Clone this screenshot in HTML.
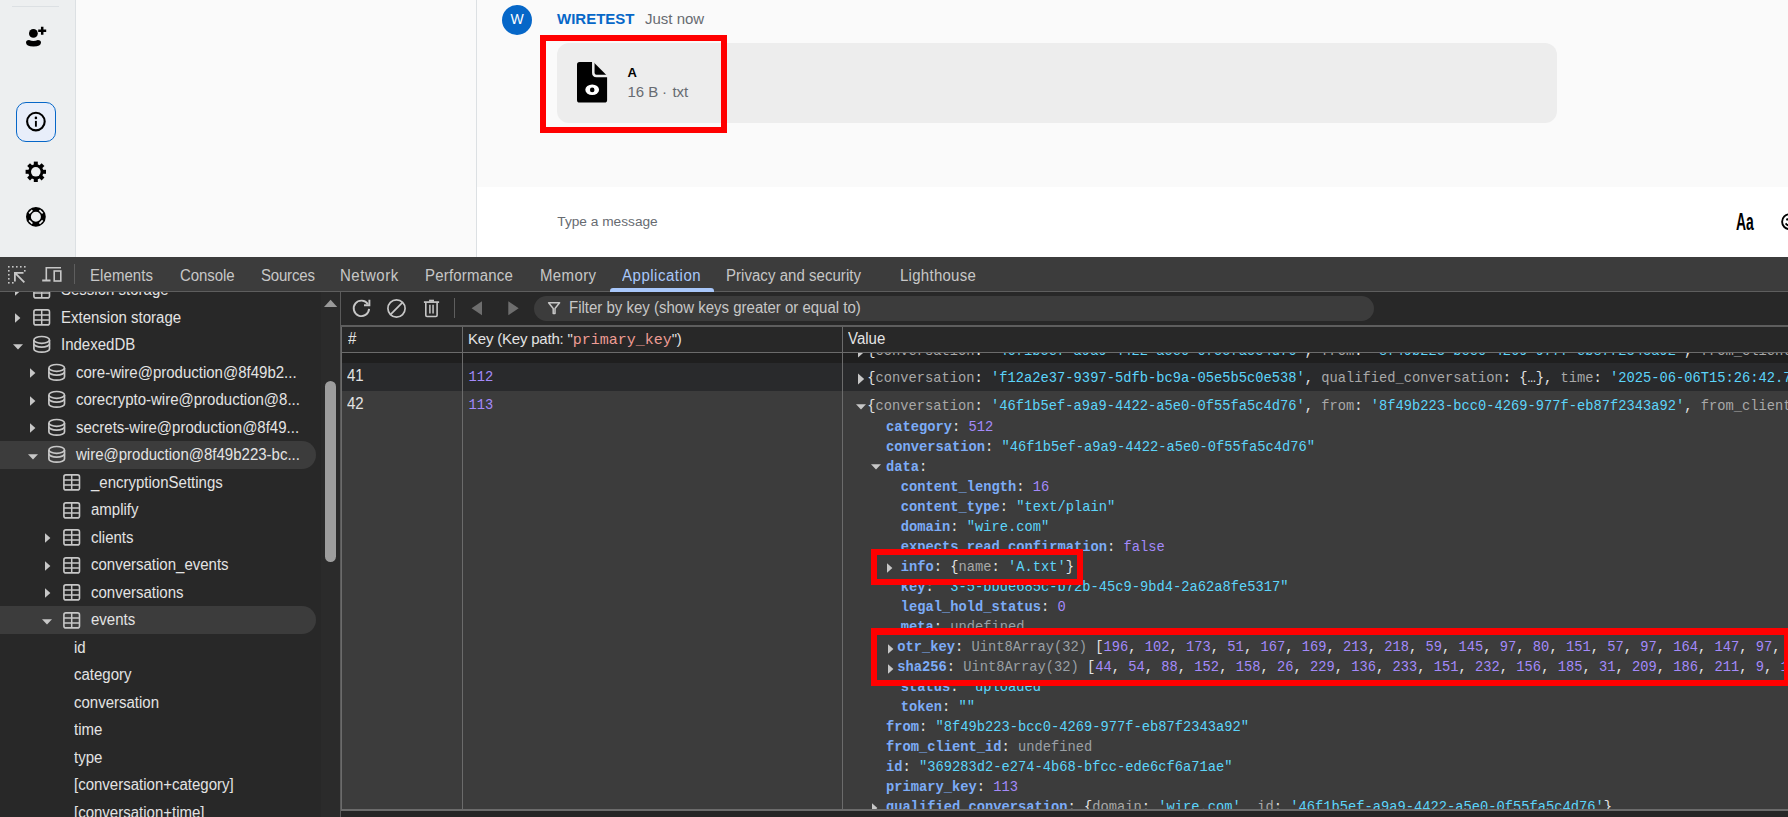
<!DOCTYPE html><html><head><meta charset="utf-8"><style>html,body{margin:0;padding:0;}body{width:1788px;height:817px;overflow:hidden;position:relative;background:#fafafa;font-family:"Liberation Sans",sans-serif;}</style></head><body>
<div style="position:absolute;left:0px;top:0px;width:75px;height:257px;background:#edeff0;"></div>
<div style="position:absolute;left:75px;top:0px;width:1px;height:257px;background:#dce0e3;"></div>
<div style="position:absolute;left:76px;top:0px;width:400px;height:257px;background:#fafafa;"></div>
<div style="position:absolute;left:476px;top:0px;width:1px;height:257px;background:#dce0e3;"></div>
<div style="position:absolute;left:477px;top:0px;width:1311px;height:187px;background:#fafafa;"></div>
<div style="position:absolute;left:477px;top:187px;width:1311px;height:70px;background:#ffffff;"></div>
<div style="position:absolute;left:12px;top:6px;width:47px;height:1px;background:#dce0e3;"></div>
<svg style="position:absolute;left:20px;top:20px;" width="32" height="32" viewBox="0 0 32 32"><circle cx="13.4" cy="13.4" r="4.4" fill="#000"/><path d="M6 22.5 Q6 20 9 20 Q13.4 21.8 17.8 20 Q21 20 21 22.5 Q21 26.5 13.5 26.5 Q6 26.5 6 22.5Z" fill="#000"/><path d="M18.2 10.7h8M22.2 6.7v8" stroke="#000" stroke-width="2.5"/></svg>
<div style="position:absolute;left:16px;top:102px;width:38px;height:38px;border:1px solid #0667c8;border-radius:10px;background:#e8eefa;"></div>
<svg style="position:absolute;left:24px;top:110px;" width="24" height="24" viewBox="0 0 24 24"><circle cx="11.9" cy="11.6" r="8.8" fill="none" stroke="#000" stroke-width="2.1"/><circle cx="11.9" cy="7.9" r="1.3" fill="#000"/><rect x="10.95" y="10.9" width="1.9" height="5.8" fill="#000"/></svg>
<svg style="position:absolute;left:24px;top:160px;" width="24" height="24" viewBox="0 0 24 24"><g transform="translate(11.8,11.8)"><g fill="#000"><rect x="-2" y="-10.2" width="4" height="4" transform="rotate(0)"/><rect x="-2" y="-10.2" width="4" height="4" transform="rotate(45)"/><rect x="-2" y="-10.2" width="4" height="4" transform="rotate(90)"/><rect x="-2" y="-10.2" width="4" height="4" transform="rotate(135)"/><rect x="-2" y="-10.2" width="4" height="4" transform="rotate(180)"/><rect x="-2" y="-10.2" width="4" height="4" transform="rotate(225)"/><rect x="-2" y="-10.2" width="4" height="4" transform="rotate(270)"/><rect x="-2" y="-10.2" width="4" height="4" transform="rotate(315)"/></g><circle r="7.6" fill="#000"/><circle r="4.8" fill="#edeff0"/></g></svg>
<svg style="position:absolute;left:24px;top:205px;" width="24" height="24" viewBox="0 0 24 24"><circle cx="11.9" cy="11.8" r="7.45" fill="none" stroke="#000" stroke-width="4.9"/><path d="M18.69 15.44L15.44 18.69M8.36 18.69L5.11 15.44M5.11 8.36L8.36 5.11M15.44 5.11L18.69 8.36" stroke="#edeff0" stroke-width="1.7" fill="none"/></svg>
<div style="position:absolute;left:502px;top:5px;width:30px;height:30px;border-radius:50%;background:#0667c8;color:#fff;font:14px/28px 'Liberation Sans',sans-serif;text-align:center;">W</div>
<div style="position:absolute;left:557px;top:10.90px;font:bold 15px/15px 'Liberation Sans',sans-serif;color:#0667c8;white-space:pre;">WIRETEST</div>
<div style="position:absolute;left:645px;top:10.90px;font:normal 15px/15px 'Liberation Sans',sans-serif;color:#676b71;white-space:pre;">Just now</div>
<div style="position:absolute;left:557px;top:43px;width:1000px;height:80px;border-radius:12px;background:#ededed;"></div>
<svg style="position:absolute;left:577px;top:62px;" width="31" height="41" viewBox="0 0 31 41"><path d="M2.6 0H16.4L30.1 13.8V38Q30.1 40.6 27.5 40.6H2.6Q0 40.6 0 38V2.6Q0 0 2.6 0Z" fill="#000"/><path d="M16.3 -1V10.8Q16.3 14 19.5 14H31" fill="none" stroke="#ededed" stroke-width="2.5"/><ellipse cx="15.2" cy="27.8" rx="6.9" ry="5.2" fill="#fff"/><circle cx="15.2" cy="27.9" r="2.3" fill="#000"/></svg>
<div style="position:absolute;left:627.5px;top:65.99px;font:bold 13px/13px 'Liberation Sans',sans-serif;color:#000;white-space:pre;">A</div>
<div style="position:absolute;left:627.5px;top:83.90px;font:normal 15px/15px 'Liberation Sans',sans-serif;color:#676b71;white-space:pre;">16 B</div>
<div style="position:absolute;left:662px;top:83.90px;font:normal 15px/15px 'Liberation Sans',sans-serif;color:#676b71;white-space:pre;">·</div>
<div style="position:absolute;left:672.4px;top:83.90px;font:normal 15px/15px 'Liberation Sans',sans-serif;color:#676b71;white-space:pre;">txt</div>
<div style="position:absolute;left:557.3px;top:214.90px;font:normal 13.7px/13.7px 'Liberation Sans',sans-serif;color:#676b71;white-space:pre;">Type a message</div>
<div style="position:absolute;left:1736px;top:209.68px;font:bold 24px/24px 'Liberation Sans',sans-serif;color:#000;white-space:pre;transform:scaleX(0.58);transform-origin:left;">Aa</div>
<svg style="position:absolute;left:1778px;top:211px;" width="10" height="22" viewBox="0 0 10 22"><circle cx="11.6" cy="10.7" r="7.5" fill="none" stroke="#000" stroke-width="1.9"/><circle cx="9.3" cy="8.4" r="1.2" fill="#000"/><path d="M7.6 12.4Q9.5 14.8 12 14.6" fill="none" stroke="#000" stroke-width="1.7"/></svg>
<div style="position:absolute;left:540px;top:35px;width:175px;height:86px;border:6px solid #f00;"></div>
<div style="position:absolute;left:0px;top:257px;width:1788px;height:560px;background:#282828;"></div>
<div style="position:absolute;left:0px;top:257px;width:1788px;height:34px;background:#3c3c3c;"></div>
<div style="position:absolute;left:0px;top:291px;width:1788px;height:1px;background:#5e5e5e;"></div>
<svg style="position:absolute;left:6px;top:264px;" width="22" height="22" viewBox="0 0 22 22"><g fill="#c7c7c7"><rect x="2" y="2" width="1.6" height="1.6"/><rect x="6" y="2" width="1.6" height="1.6"/><rect x="10" y="2" width="1.6" height="1.6"/><rect x="14" y="2" width="1.6" height="1.6"/><rect x="18" y="2" width="1.6" height="1.6"/><rect x="2" y="6" width="1.6" height="1.6"/><rect x="2" y="10" width="1.6" height="1.6"/><rect x="2" y="14" width="1.6" height="1.6"/><rect x="2" y="18" width="1.6" height="1.6"/><rect x="6" y="18" width="1.6" height="1.6"/><rect x="18" y="6" width="1.6" height="1.6"/></g><path d="M8 8h9.5v1.8H11.1L19 17.7 17.7 19 9.8 11.1V17.5H8Z" fill="#c7c7c7"/></svg>
<svg style="position:absolute;left:41px;top:264px;" width="22" height="22" viewBox="0 0 22 22"><path d="M4.5 3H20V4.6H6.1V15.6H9.5V17.6H1.2V15.6H4.5Z" fill="#c7c7c7"/><rect x="13.2" y="7" width="6.6" height="10" fill="none" stroke="#c7c7c7" stroke-width="1.6"/></svg>
<div style="position:absolute;left:74px;top:264px;width:1px;height:20px;background:#5e5e5e;"></div>
<div style="position:absolute;left:90px;top:267.89px;font:normal 15.6px/15.6px 'Liberation Sans',sans-serif;color:#c7c7c7;white-space:pre;letter-spacing:0.07px;transform:scaleX(0.962);transform-origin:0 0;">Elements</div>
<div style="position:absolute;left:180px;top:267.89px;font:normal 15.6px/15.6px 'Liberation Sans',sans-serif;color:#c7c7c7;white-space:pre;letter-spacing:-0.07px;transform:scaleX(0.962);transform-origin:0 0;">Console</div>
<div style="position:absolute;left:260.8px;top:267.89px;font:normal 15.6px/15.6px 'Liberation Sans',sans-serif;color:#c7c7c7;white-space:pre;letter-spacing:-0.2px;transform:scaleX(0.962);transform-origin:0 0;">Sources</div>
<div style="position:absolute;left:339.7px;top:267.89px;font:normal 15.6px/15.6px 'Liberation Sans',sans-serif;color:#c7c7c7;white-space:pre;letter-spacing:0.55px;transform:scaleX(0.962);transform-origin:0 0;">Network</div>
<div style="position:absolute;left:425px;top:267.89px;font:normal 15.6px/15.6px 'Liberation Sans',sans-serif;color:#c7c7c7;white-space:pre;letter-spacing:0.2px;transform:scaleX(0.962);transform-origin:0 0;">Performance</div>
<div style="position:absolute;left:540px;top:267.89px;font:normal 15.6px/15.6px 'Liberation Sans',sans-serif;color:#c7c7c7;white-space:pre;letter-spacing:0.38px;transform:scaleX(0.962);transform-origin:0 0;">Memory</div>
<div style="position:absolute;left:622px;top:267.89px;font:normal 15.6px/15.6px 'Liberation Sans',sans-serif;color:#a8c7fa;white-space:pre;letter-spacing:0.54px;transform:scaleX(0.962);transform-origin:0 0;">Application</div>
<div style="position:absolute;left:726px;top:267.89px;font:normal 15.6px/15.6px 'Liberation Sans',sans-serif;color:#c7c7c7;white-space:pre;letter-spacing:0.04px;transform:scaleX(0.962);transform-origin:0 0;">Privacy and security</div>
<div style="position:absolute;left:900px;top:267.89px;font:normal 15.6px/15.6px 'Liberation Sans',sans-serif;color:#c7c7c7;white-space:pre;letter-spacing:0.28px;transform:scaleX(0.962);transform-origin:0 0;">Lighthouse</div>
<div style="position:absolute;left:610px;top:288px;width:104px;height:4px;background:#a8c7fa;border-radius:3px 3px 0 0;"></div>
<div style="position:absolute;left:0px;top:292px;width:340px;height:525px;background:#282828;"></div>
<div style="position:absolute;left:321px;top:292px;width:19px;height:525px;background:#2b2b2b;"></div>
<div style="position:absolute;left:340px;top:292px;width:1px;height:525px;background:#5a5a5a;"></div>
<svg style="position:absolute;left:323px;top:298px;" width="16" height="12" viewBox="0 0 16 12"><path d="M1 9L7.6 1.8L14.2 9Z" fill="#9a9a9a"/></svg>
<div style="position:absolute;left:325px;top:381px;width:11px;height:181px;border-radius:5.5px;background:#9e9e9e;"></div>
<div style="position:absolute;left:0;top:292px;width:321px;height:525px;overflow:hidden;">
<svg style="position:absolute;left:14.7px;top:-6.5px;" width="7" height="10" viewBox="0 0 7 10"><path d="M0 0.3L5.4 5L0 9.7Z" fill="#c7c7c7"/></svg>
<svg style="position:absolute;left:33px;top:-10.5px;" width="18" height="17" viewBox="0 0 18 17"><rect x="0.9" y="0.9" width="15.6" height="15" rx="2" fill="none" stroke="#c7c7c7" stroke-width="1.6"/><path d="M1 5.9H16.5M1 11H16.5M8.7 1V16" stroke="#c7c7c7" stroke-width="1.5"/></svg>
<div style="position:absolute;left:60.6px;top:-9.91px;font:normal 15.6px/15.6px 'Liberation Sans',sans-serif;color:#e3e3e3;white-space:pre;transform:scaleX(0.962);transform-origin:0 0;">Session storage</div>
<svg style="position:absolute;left:14.7px;top:21.0px;" width="7" height="10" viewBox="0 0 7 10"><path d="M0 0.3L5.4 5L0 9.7Z" fill="#c7c7c7"/></svg>
<svg style="position:absolute;left:33px;top:17.0px;" width="18" height="17" viewBox="0 0 18 17"><rect x="0.9" y="0.9" width="15.6" height="15" rx="2" fill="none" stroke="#c7c7c7" stroke-width="1.6"/><path d="M1 5.9H16.5M1 11H16.5M8.7 1V16" stroke="#c7c7c7" stroke-width="1.5"/></svg>
<div style="position:absolute;left:60.6px;top:17.59px;font:normal 15.6px/15.6px 'Liberation Sans',sans-serif;color:#e3e3e3;white-space:pre;transform:scaleX(0.962);transform-origin:0 0;">Extension storage</div>
<svg style="position:absolute;left:12.6px;top:51.5px;" width="11" height="6" viewBox="0 0 11 6"><path d="M0 0.2H10L5 5.6Z" fill="#c7c7c7"/></svg>
<svg style="position:absolute;left:33px;top:43.0px;" width="18" height="19" viewBox="0 0 18 19"><g fill="none" stroke="#c7c7c7" stroke-width="1.7"><ellipse cx="8.7" cy="4.9" rx="7.8" ry="3.4"/><path d="M0.9 4.9V14A7.8 3.2 0 0 0 16.5 14V4.9"/><path d="M0.9 8.8A7.8 3.3 0 0 0 16.5 8.8"/></g></svg>
<div style="position:absolute;left:60.6px;top:45.09px;font:normal 15.6px/15.6px 'Liberation Sans',sans-serif;color:#e3e3e3;white-space:pre;transform:scaleX(0.962);transform-origin:0 0;">IndexedDB</div>
<svg style="position:absolute;left:29.7px;top:76.0px;" width="7" height="10" viewBox="0 0 7 10"><path d="M0 0.3L5.4 5L0 9.7Z" fill="#c7c7c7"/></svg>
<svg style="position:absolute;left:47.7px;top:70.5px;" width="18" height="19" viewBox="0 0 18 19"><g fill="none" stroke="#c7c7c7" stroke-width="1.7"><ellipse cx="8.7" cy="4.9" rx="7.8" ry="3.4"/><path d="M0.9 4.9V14A7.8 3.2 0 0 0 16.5 14V4.9"/><path d="M0.9 8.8A7.8 3.3 0 0 0 16.5 8.8"/></g></svg>
<div style="position:absolute;left:76px;top:72.59px;font:normal 15.6px/15.6px 'Liberation Sans',sans-serif;color:#e3e3e3;white-space:pre;transform:scaleX(0.962);transform-origin:0 0;">core-wire@production@8f49b2...</div>
<svg style="position:absolute;left:29.7px;top:103.5px;" width="7" height="10" viewBox="0 0 7 10"><path d="M0 0.3L5.4 5L0 9.7Z" fill="#c7c7c7"/></svg>
<svg style="position:absolute;left:47.7px;top:98.0px;" width="18" height="19" viewBox="0 0 18 19"><g fill="none" stroke="#c7c7c7" stroke-width="1.7"><ellipse cx="8.7" cy="4.9" rx="7.8" ry="3.4"/><path d="M0.9 4.9V14A7.8 3.2 0 0 0 16.5 14V4.9"/><path d="M0.9 8.8A7.8 3.3 0 0 0 16.5 8.8"/></g></svg>
<div style="position:absolute;left:76px;top:100.09px;font:normal 15.6px/15.6px 'Liberation Sans',sans-serif;color:#e3e3e3;white-space:pre;transform:scaleX(0.962);transform-origin:0 0;">corecrypto-wire@production@8...</div>
<svg style="position:absolute;left:29.7px;top:131.0px;" width="7" height="10" viewBox="0 0 7 10"><path d="M0 0.3L5.4 5L0 9.7Z" fill="#c7c7c7"/></svg>
<svg style="position:absolute;left:47.7px;top:125.5px;" width="18" height="19" viewBox="0 0 18 19"><g fill="none" stroke="#c7c7c7" stroke-width="1.7"><ellipse cx="8.7" cy="4.9" rx="7.8" ry="3.4"/><path d="M0.9 4.9V14A7.8 3.2 0 0 0 16.5 14V4.9"/><path d="M0.9 8.8A7.8 3.3 0 0 0 16.5 8.8"/></g></svg>
<div style="position:absolute;left:76px;top:127.59px;font:normal 15.6px/15.6px 'Liberation Sans',sans-serif;color:#e3e3e3;white-space:pre;transform:scaleX(0.962);transform-origin:0 0;">secrets-wire@production@8f49...</div>
<div style="position:absolute;left:0;top:149.0px;width:316px;height:28px;border-radius:0 14px 14px 0;background:#3c3c3c;"></div>
<svg style="position:absolute;left:27.599999999999998px;top:161.5px;" width="11" height="6" viewBox="0 0 11 6"><path d="M0 0.2H10L5 5.6Z" fill="#c7c7c7"/></svg>
<svg style="position:absolute;left:47.7px;top:153.0px;" width="18" height="19" viewBox="0 0 18 19"><g fill="none" stroke="#c7c7c7" stroke-width="1.7"><ellipse cx="8.7" cy="4.9" rx="7.8" ry="3.4"/><path d="M0.9 4.9V14A7.8 3.2 0 0 0 16.5 14V4.9"/><path d="M0.9 8.8A7.8 3.3 0 0 0 16.5 8.8"/></g></svg>
<div style="position:absolute;left:76px;top:155.09px;font:normal 15.6px/15.6px 'Liberation Sans',sans-serif;color:#e3e3e3;white-space:pre;transform:scaleX(0.962);transform-origin:0 0;">wire@production@8f49b223-bc...</div>
<svg style="position:absolute;left:62.5px;top:182.0px;" width="18" height="17" viewBox="0 0 18 17"><rect x="0.9" y="0.9" width="15.6" height="15" rx="2" fill="none" stroke="#c7c7c7" stroke-width="1.6"/><path d="M1 5.9H16.5M1 11H16.5M8.7 1V16" stroke="#c7c7c7" stroke-width="1.5"/></svg>
<div style="position:absolute;left:91.4px;top:182.59px;font:normal 15.6px/15.6px 'Liberation Sans',sans-serif;color:#e3e3e3;white-space:pre;transform:scaleX(0.962);transform-origin:0 0;">_encryptionSettings</div>
<svg style="position:absolute;left:62.5px;top:209.5px;" width="18" height="17" viewBox="0 0 18 17"><rect x="0.9" y="0.9" width="15.6" height="15" rx="2" fill="none" stroke="#c7c7c7" stroke-width="1.6"/><path d="M1 5.9H16.5M1 11H16.5M8.7 1V16" stroke="#c7c7c7" stroke-width="1.5"/></svg>
<div style="position:absolute;left:91.4px;top:210.09px;font:normal 15.6px/15.6px 'Liberation Sans',sans-serif;color:#e3e3e3;white-space:pre;transform:scaleX(0.962);transform-origin:0 0;">amplify</div>
<svg style="position:absolute;left:44.5px;top:241.0px;" width="7" height="10" viewBox="0 0 7 10"><path d="M0 0.3L5.4 5L0 9.7Z" fill="#c7c7c7"/></svg>
<svg style="position:absolute;left:62.5px;top:237.0px;" width="18" height="17" viewBox="0 0 18 17"><rect x="0.9" y="0.9" width="15.6" height="15" rx="2" fill="none" stroke="#c7c7c7" stroke-width="1.6"/><path d="M1 5.9H16.5M1 11H16.5M8.7 1V16" stroke="#c7c7c7" stroke-width="1.5"/></svg>
<div style="position:absolute;left:91.4px;top:237.59px;font:normal 15.6px/15.6px 'Liberation Sans',sans-serif;color:#e3e3e3;white-space:pre;transform:scaleX(0.962);transform-origin:0 0;">clients</div>
<svg style="position:absolute;left:44.5px;top:268.5px;" width="7" height="10" viewBox="0 0 7 10"><path d="M0 0.3L5.4 5L0 9.7Z" fill="#c7c7c7"/></svg>
<svg style="position:absolute;left:62.5px;top:264.5px;" width="18" height="17" viewBox="0 0 18 17"><rect x="0.9" y="0.9" width="15.6" height="15" rx="2" fill="none" stroke="#c7c7c7" stroke-width="1.6"/><path d="M1 5.9H16.5M1 11H16.5M8.7 1V16" stroke="#c7c7c7" stroke-width="1.5"/></svg>
<div style="position:absolute;left:91.4px;top:265.09px;font:normal 15.6px/15.6px 'Liberation Sans',sans-serif;color:#e3e3e3;white-space:pre;transform:scaleX(0.962);transform-origin:0 0;">conversation_events</div>
<svg style="position:absolute;left:44.5px;top:296.0px;" width="7" height="10" viewBox="0 0 7 10"><path d="M0 0.3L5.4 5L0 9.7Z" fill="#c7c7c7"/></svg>
<svg style="position:absolute;left:62.5px;top:292.0px;" width="18" height="17" viewBox="0 0 18 17"><rect x="0.9" y="0.9" width="15.6" height="15" rx="2" fill="none" stroke="#c7c7c7" stroke-width="1.6"/><path d="M1 5.9H16.5M1 11H16.5M8.7 1V16" stroke="#c7c7c7" stroke-width="1.5"/></svg>
<div style="position:absolute;left:91.4px;top:292.59px;font:normal 15.6px/15.6px 'Liberation Sans',sans-serif;color:#e3e3e3;white-space:pre;transform:scaleX(0.962);transform-origin:0 0;">conversations</div>
<div style="position:absolute;left:0;top:314.0px;width:316px;height:28px;border-radius:0 14px 14px 0;background:#3c3c3c;"></div>
<svg style="position:absolute;left:42.4px;top:326.5px;" width="11" height="6" viewBox="0 0 11 6"><path d="M0 0.2H10L5 5.6Z" fill="#c7c7c7"/></svg>
<svg style="position:absolute;left:62.5px;top:319.5px;" width="18" height="17" viewBox="0 0 18 17"><rect x="0.9" y="0.9" width="15.6" height="15" rx="2" fill="none" stroke="#c7c7c7" stroke-width="1.6"/><path d="M1 5.9H16.5M1 11H16.5M8.7 1V16" stroke="#c7c7c7" stroke-width="1.5"/></svg>
<div style="position:absolute;left:91.4px;top:320.09px;font:normal 15.6px/15.6px 'Liberation Sans',sans-serif;color:#e3e3e3;white-space:pre;transform:scaleX(0.962);transform-origin:0 0;">events</div>
<div style="position:absolute;left:74px;top:347.59px;font:normal 15.6px/15.6px 'Liberation Sans',sans-serif;color:#e3e3e3;white-space:pre;transform:scaleX(0.962);transform-origin:0 0;">id</div>
<div style="position:absolute;left:74px;top:375.09px;font:normal 15.6px/15.6px 'Liberation Sans',sans-serif;color:#e3e3e3;white-space:pre;transform:scaleX(0.962);transform-origin:0 0;">category</div>
<div style="position:absolute;left:74px;top:402.59px;font:normal 15.6px/15.6px 'Liberation Sans',sans-serif;color:#e3e3e3;white-space:pre;transform:scaleX(0.962);transform-origin:0 0;">conversation</div>
<div style="position:absolute;left:74px;top:430.09px;font:normal 15.6px/15.6px 'Liberation Sans',sans-serif;color:#e3e3e3;white-space:pre;transform:scaleX(0.962);transform-origin:0 0;">time</div>
<div style="position:absolute;left:74px;top:457.59px;font:normal 15.6px/15.6px 'Liberation Sans',sans-serif;color:#e3e3e3;white-space:pre;transform:scaleX(0.962);transform-origin:0 0;">type</div>
<div style="position:absolute;left:74px;top:485.09px;font:normal 15.6px/15.6px 'Liberation Sans',sans-serif;color:#e3e3e3;white-space:pre;transform:scaleX(0.962);transform-origin:0 0;">[conversation+category]</div>
<div style="position:absolute;left:74px;top:512.59px;font:normal 15.6px/15.6px 'Liberation Sans',sans-serif;color:#e3e3e3;white-space:pre;transform:scaleX(0.962);transform-origin:0 0;">[conversation+time]</div>
</div>
<div style="position:absolute;left:341px;top:292px;width:1447px;height:33px;background:#282828;"></div>
<div style="position:absolute;left:341px;top:325px;width:1447px;height:2px;background:#5e5e5e;"></div>
<svg style="position:absolute;left:350px;top:297px;" width="24" height="24" viewBox="0 0 24 24"><path d="M19.1 11.9A7.7 7.7 0 1 1 17.9 7.2" fill="none" stroke="#c7c7c7" stroke-width="1.9"/><path d="M19.4 2.8V8.2H14" fill="none" stroke="#c7c7c7" stroke-width="1.9"/></svg>
<svg style="position:absolute;left:385px;top:297px;" width="24" height="24" viewBox="0 0 24 24"><circle cx="11.5" cy="11.5" r="8.6" fill="none" stroke="#c7c7c7" stroke-width="1.7"/><path d="M17.6 5.4L5.4 17.6" stroke="#c7c7c7" stroke-width="1.7"/></svg>
<svg style="position:absolute;left:420px;top:297px;" width="24" height="24" viewBox="0 0 24 24"><path d="M3.9 5.1H19.1" fill="none" stroke="#c7c7c7" stroke-width="1.7"/><rect x="9.1" y="2.7" width="4.9" height="2" fill="#c7c7c7"/><path d="M5.8 5.5V18.3Q5.8 19.5 7 19.5H15.9Q17.1 19.5 17.1 18.3V5.5" fill="none" stroke="#c7c7c7" stroke-width="1.6"/><path d="M9.9 7.8V16.4M13.05 7.8V16.4" stroke="#c7c7c7" stroke-width="1.5"/></svg>
<div style="position:absolute;left:454px;top:298px;width:1px;height:20px;background:#5e5e5e;"></div>
<svg style="position:absolute;left:471px;top:301px;" width="12" height="15" viewBox="0 0 12 15"><path d="M11 0.3V14.2L0.6 7.3Z" fill="#6e6e6e"/></svg>
<svg style="position:absolute;left:508px;top:301px;" width="12" height="15" viewBox="0 0 12 15"><path d="M0.3 0.3V14.2L10.7 7.3Z" fill="#6e6e6e"/></svg>
<div style="position:absolute;left:534px;top:296px;width:840px;height:25px;border-radius:12.5px;background:#3c3c3c;"></div>
<svg style="position:absolute;left:547px;top:301px;" width="14" height="14" viewBox="0 0 14 14"><path d="M1.6 1.8H12.6L8 7.4V12.6H6.2V7.4Z" fill="none" stroke="#c7c7c7" stroke-width="1.5" stroke-linejoin="round"/></svg>
<div style="position:absolute;left:568.9px;top:299.99px;font:normal 15.6px/15.6px 'Liberation Sans',sans-serif;color:#c7c7c7;white-space:pre;transform:scaleX(0.962);transform-origin:0 0;">Filter by key (show keys greater or equal to)</div>
<div style="position:absolute;left:341px;top:327px;width:1447px;height:25px;background:#282828;"></div>
<div style="position:absolute;left:341px;top:352px;width:1447px;height:1px;background:#6b6b6b;"></div>
<div style="position:absolute;left:341px;top:353px;width:1447px;height:10px;background:#1f1f1f;"></div>
<div style="position:absolute;left:341px;top:363px;width:1447px;height:28px;background:#292a2c;"></div>
<div style="position:absolute;left:341px;top:391px;width:1447px;height:418px;background:#3c3c3c;"></div>
<div style="position:absolute;left:341px;top:327px;width:1px;height:483px;background:#6b6b6b;"></div>
<div style="position:absolute;left:462px;top:327px;width:1px;height:483px;background:#6b6b6b;"></div>
<div style="position:absolute;left:842px;top:327px;width:1px;height:483px;background:#6b6b6b;"></div>
<div style="position:absolute;left:341px;top:809px;width:1447px;height:2px;background:#6b6b6b;"></div>
<div style="position:absolute;left:341px;top:811px;width:1447px;height:6px;background:#262626;"></div>
<div style="position:absolute;left:347.5px;top:330.89px;font:normal 15.6px/15.6px 'Liberation Sans',sans-serif;color:#e3e3e3;white-space:pre;transform:scaleX(0.962);transform-origin:0 0;">#</div>
<div style="position:absolute;left:468px;top:331.00px;font:15px/15px 'Liberation Sans',sans-serif;color:#e3e3e3;white-space:pre;letter-spacing:-0.2px;">Key (Key path: "<span style="font-family:'Liberation Mono',monospace;font-size:15px;letter-spacing:0;color:#ee9c94;">primary_key</span>")</div>
<div style="position:absolute;left:848px;top:330.89px;font:normal 15.6px/15.6px 'Liberation Sans',sans-serif;color:#e3e3e3;white-space:pre;transform:scaleX(0.962);transform-origin:0 0;">Value</div>
<div style="position:absolute;left:346.8px;top:368.09px;font:normal 15.6px/15.6px 'Liberation Sans',sans-serif;color:#e3e3e3;white-space:pre;transform:scaleX(0.962);transform-origin:0 0;">41</div>
<div style="position:absolute;left:346.8px;top:395.69px;font:normal 15.6px/15.6px 'Liberation Sans',sans-serif;color:#e3e3e3;white-space:pre;transform:scaleX(0.962);transform-origin:0 0;">42</div>
<div style="position:absolute;left:468.6px;top:371.36px;font:normal 13.76px/13.76px 'Liberation Mono',monospace;color:#a48afb;white-space:pre;">112</div>
<div style="position:absolute;left:468.6px;top:399.16px;font:normal 13.76px/13.76px 'Liberation Mono',monospace;color:#a48afb;white-space:pre;">113</div>
<div style="position:absolute;left:843px;top:353px;width:945px;height:456px;overflow:hidden;">
<svg style="position:absolute;left:14.899999999999977px;top:-7px;" width="7" height="12" viewBox="0 0 7 12"><path d="M0 0.5L6.2 6L0 11.5Z" fill="#c7c7c7"/></svg>
<div style="position:absolute;left:24.299999999999955px;top:-8.04px;font:normal 13.76px/13.76px 'Liberation Mono',monospace;color:#e3e3e3;white-space:pre;"><span style="color:#e3e3e3;">{</span><span style="color:#a8a8a8;">conversation</span><span style="color:#e3e3e3;">: </span><span style="color:#5cd5fb;">&#x27;46f1b5ef-a9a9-4422-a5e0-0f55fa5c4d76&#x27;</span><span style="color:#e3e3e3;">, </span><span style="color:#a8a8a8;">from</span><span style="color:#e3e3e3;">: </span><span style="color:#5cd5fb;">&#x27;8f49b223-bcc0-4269-977f-eb87f2343a92&#x27;</span><span style="color:#e3e3e3;">, </span><span style="color:#a8a8a8;">from_client_id</span><span style="color:#e3e3e3;">: </span><span style="color:#9aa0a6;">undefined</span></div>
<svg style="position:absolute;left:14.899999999999977px;top:20.30000000000001px;" width="7" height="12" viewBox="0 0 7 12"><path d="M0 0.5L6.2 6L0 11.5Z" fill="#c7c7c7"/></svg>
<div style="position:absolute;left:24.299999999999955px;top:18.86px;font:normal 13.76px/13.76px 'Liberation Mono',monospace;color:#e3e3e3;white-space:pre;"><span style="color:#e3e3e3;">{</span><span style="color:#a8a8a8;">conversation</span><span style="color:#e3e3e3;">: </span><span style="color:#5cd5fb;">&#x27;f12a2e37-9397-5dfb-bc9a-05e5b5c0e538&#x27;</span><span style="color:#e3e3e3;">, </span><span style="color:#a8a8a8;">qualified_conversation</span><span style="color:#e3e3e3;">: </span><span style="color:#e3e3e3;">{…}</span><span style="color:#e3e3e3;">, </span><span style="color:#a8a8a8;">time</span><span style="color:#e3e3e3;">: </span><span style="color:#5cd5fb;">&#x27;2025-06-06T15:26:42.763Z&#x27;</span></div>
<svg style="position:absolute;left:12.799999999999955px;top:51.30000000000001px;" width="11" height="6" viewBox="0 0 11 6"><path d="M0 0.2H10L5 5.6Z" fill="#c7c7c7"/></svg>
<div style="position:absolute;left:24.299999999999955px;top:46.66px;font:normal 13.76px/13.76px 'Liberation Mono',monospace;color:#e3e3e3;white-space:pre;"><span style="color:#e3e3e3;">{</span><span style="color:#a8a8a8;">conversation</span><span style="color:#e3e3e3;">: </span><span style="color:#5cd5fb;">&#x27;46f1b5ef-a9a9-4422-a5e0-0f55fa5c4d76&#x27;</span><span style="color:#e3e3e3;">, </span><span style="color:#a8a8a8;">from</span><span style="color:#e3e3e3;">: </span><span style="color:#5cd5fb;">&#x27;8f49b223-bcc0-4269-977f-eb87f2343a92&#x27;</span><span style="color:#e3e3e3;">, </span><span style="color:#a8a8a8;">from_client_id</span><span style="color:#e3e3e3;">: </span><span style="color:#9aa0a6;">undefined</span></div>
<div style="position:absolute;left:42.89999999999998px;top:67.56px;font:normal 13.76px/13.76px 'Liberation Mono',monospace;color:#e3e3e3;white-space:pre;"><span style="color:#7cacf8;font-weight:bold;">category</span><span style="color:#e3e3e3;">: </span><span style="color:#a48afb;">512</span></div>
<div style="position:absolute;left:42.89999999999998px;top:87.56px;font:normal 13.76px/13.76px 'Liberation Mono',monospace;color:#e3e3e3;white-space:pre;"><span style="color:#7cacf8;font-weight:bold;">conversation</span><span style="color:#e3e3e3;">: </span><span style="color:#5cd5fb;">&quot;46f1b5ef-a9a9-4422-a5e0-0f55fa5c4d76&quot;</span></div>
<svg style="position:absolute;left:27.5px;top:111.29999999999995px;" width="11" height="6" viewBox="0 0 11 6"><path d="M0 0.2H10L5 5.6Z" fill="#c7c7c7"/></svg>
<div style="position:absolute;left:42.89999999999998px;top:107.56px;font:normal 13.76px/13.76px 'Liberation Mono',monospace;color:#e3e3e3;white-space:pre;"><span style="color:#7cacf8;font-weight:bold;">data</span><span style="color:#e3e3e3;">: </span></div>
<div style="position:absolute;left:57.700000000000045px;top:127.56px;font:normal 13.76px/13.76px 'Liberation Mono',monospace;color:#e3e3e3;white-space:pre;"><span style="color:#7cacf8;font-weight:bold;">content_length</span><span style="color:#e3e3e3;">: </span><span style="color:#a48afb;">16</span></div>
<div style="position:absolute;left:57.700000000000045px;top:147.56px;font:normal 13.76px/13.76px 'Liberation Mono',monospace;color:#e3e3e3;white-space:pre;"><span style="color:#7cacf8;font-weight:bold;">content_type</span><span style="color:#e3e3e3;">: </span><span style="color:#5cd5fb;">&quot;text/plain&quot;</span></div>
<div style="position:absolute;left:57.700000000000045px;top:167.56px;font:normal 13.76px/13.76px 'Liberation Mono',monospace;color:#e3e3e3;white-space:pre;"><span style="color:#7cacf8;font-weight:bold;">domain</span><span style="color:#e3e3e3;">: </span><span style="color:#5cd5fb;">&quot;wire.com&quot;</span></div>
<div style="position:absolute;left:57.700000000000045px;top:187.56px;font:normal 13.76px/13.76px 'Liberation Mono',monospace;color:#e3e3e3;white-space:pre;"><span style="color:#7cacf8;font-weight:bold;">expects_read_confirmation</span><span style="color:#e3e3e3;">: </span><span style="color:#a48afb;">false</span></div>
<svg style="position:absolute;left:44.39999999999998px;top:210.29999999999995px;" width="7" height="10" viewBox="0 0 7 10"><path d="M0 0.3L5.4 5L0 9.7Z" fill="#c7c7c7"/></svg>
<div style="position:absolute;left:57.700000000000045px;top:207.56px;font:normal 13.76px/13.76px 'Liberation Mono',monospace;color:#e3e3e3;white-space:pre;"><span style="color:#7cacf8;font-weight:bold;">info</span><span style="color:#e3e3e3;">: </span><span style="color:#e3e3e3;">{</span><span style="color:#a8a8a8;">name</span><span style="color:#e3e3e3;">: </span><span style="color:#5cd5fb;">&#x27;A.txt&#x27;</span><span style="color:#e3e3e3;">}</span></div>
<div style="position:absolute;left:57.700000000000045px;top:227.56px;font:normal 13.76px/13.76px 'Liberation Mono',monospace;color:#e3e3e3;white-space:pre;"><span style="color:#7cacf8;font-weight:bold;">key</span><span style="color:#e3e3e3;">: </span><span style="color:#5cd5fb;">&quot;3-5-bbde685c-b72b-45c9-9bd4-2a62a8fe5317&quot;</span></div>
<div style="position:absolute;left:57.700000000000045px;top:247.56px;font:normal 13.76px/13.76px 'Liberation Mono',monospace;color:#e3e3e3;white-space:pre;"><span style="color:#7cacf8;font-weight:bold;">legal_hold_status</span><span style="color:#e3e3e3;">: </span><span style="color:#a48afb;">0</span></div>
<div style="position:absolute;left:57.700000000000045px;top:267.56px;font:normal 13.76px/13.76px 'Liberation Mono',monospace;color:#e3e3e3;white-space:pre;"><span style="color:#7cacf8;font-weight:bold;">meta</span><span style="color:#e3e3e3;">: </span><span style="color:#9aa0a6;">undefined</span></div>
<svg style="position:absolute;left:45px;top:291.0px;" width="7" height="10" viewBox="0 0 7 10"><path d="M0 0.3L5.4 5L0 9.7Z" fill="#c7c7c7"/></svg>
<div style="position:absolute;left:54.200000000000045px;top:287.56px;font:normal 13.76px/13.76px 'Liberation Mono',monospace;color:#e3e3e3;white-space:pre;"><span style="color:#7cacf8;font-weight:bold;">otr_key</span><span style="color:#e3e3e3;">: </span><span style="color:#9aa0a6;">Uint8Array(32) </span><span style="color:#e3e3e3;">[</span><span style="color:#a48afb;">196</span><span style="color:#e3e3e3;">, </span><span style="color:#a48afb;">102</span><span style="color:#e3e3e3;">, </span><span style="color:#a48afb;">173</span><span style="color:#e3e3e3;">, </span><span style="color:#a48afb;">51</span><span style="color:#e3e3e3;">, </span><span style="color:#a48afb;">167</span><span style="color:#e3e3e3;">, </span><span style="color:#a48afb;">169</span><span style="color:#e3e3e3;">, </span><span style="color:#a48afb;">213</span><span style="color:#e3e3e3;">, </span><span style="color:#a48afb;">218</span><span style="color:#e3e3e3;">, </span><span style="color:#a48afb;">59</span><span style="color:#e3e3e3;">, </span><span style="color:#a48afb;">145</span><span style="color:#e3e3e3;">, </span><span style="color:#a48afb;">97</span><span style="color:#e3e3e3;">, </span><span style="color:#a48afb;">80</span><span style="color:#e3e3e3;">, </span><span style="color:#a48afb;">151</span><span style="color:#e3e3e3;">, </span><span style="color:#a48afb;">57</span><span style="color:#e3e3e3;">, </span><span style="color:#a48afb;">97</span><span style="color:#e3e3e3;">, </span><span style="color:#a48afb;">164</span><span style="color:#e3e3e3;">, </span><span style="color:#a48afb;">147</span><span style="color:#e3e3e3;">, </span><span style="color:#a48afb;">97</span><span style="color:#e3e3e3;">, </span><span style="color:#a48afb;">12</span><span style="color:#e3e3e3;">, </span><span style="color:#a48afb;">200</span><span style="color:#e3e3e3;">, </span><span style="color:#a48afb;">33</span><span style="color:#e3e3e3;">, </span><span style="color:#a48afb;">41</span><span style="color:#e3e3e3;">, </span><span style="color:#a48afb;">88</span><span style="color:#e3e3e3;">, </span><span style="color:#a48afb;">90</span><span style="color:#e3e3e3;">, </span><span style="color:#a48afb;">1</span><span style="color:#e3e3e3;">, </span><span style="color:#a48afb;">2</span><span style="color:#e3e3e3;">, </span><span style="color:#a48afb;">3</span><span style="color:#e3e3e3;">, </span><span style="color:#a48afb;">4</span><span style="color:#e3e3e3;">, </span><span style="color:#a48afb;">5</span><span style="color:#e3e3e3;">, </span><span style="color:#a48afb;">6</span><span style="color:#e3e3e3;">, </span><span style="color:#a48afb;">7</span><span style="color:#e3e3e3;">, </span><span style="color:#a48afb;">8</span><span style="color:#e3e3e3;">, </span></div>
<svg style="position:absolute;left:45px;top:311.0px;" width="7" height="10" viewBox="0 0 7 10"><path d="M0 0.3L5.4 5L0 9.7Z" fill="#c7c7c7"/></svg>
<div style="position:absolute;left:54.200000000000045px;top:307.56px;font:normal 13.76px/13.76px 'Liberation Mono',monospace;color:#e3e3e3;white-space:pre;"><span style="color:#7cacf8;font-weight:bold;">sha256</span><span style="color:#e3e3e3;">: </span><span style="color:#9aa0a6;">Uint8Array(32) </span><span style="color:#e3e3e3;">[</span><span style="color:#a48afb;">44</span><span style="color:#e3e3e3;">, </span><span style="color:#a48afb;">54</span><span style="color:#e3e3e3;">, </span><span style="color:#a48afb;">88</span><span style="color:#e3e3e3;">, </span><span style="color:#a48afb;">152</span><span style="color:#e3e3e3;">, </span><span style="color:#a48afb;">158</span><span style="color:#e3e3e3;">, </span><span style="color:#a48afb;">26</span><span style="color:#e3e3e3;">, </span><span style="color:#a48afb;">229</span><span style="color:#e3e3e3;">, </span><span style="color:#a48afb;">136</span><span style="color:#e3e3e3;">, </span><span style="color:#a48afb;">233</span><span style="color:#e3e3e3;">, </span><span style="color:#a48afb;">151</span><span style="color:#e3e3e3;">, </span><span style="color:#a48afb;">232</span><span style="color:#e3e3e3;">, </span><span style="color:#a48afb;">156</span><span style="color:#e3e3e3;">, </span><span style="color:#a48afb;">185</span><span style="color:#e3e3e3;">, </span><span style="color:#a48afb;">31</span><span style="color:#e3e3e3;">, </span><span style="color:#a48afb;">209</span><span style="color:#e3e3e3;">, </span><span style="color:#a48afb;">186</span><span style="color:#e3e3e3;">, </span><span style="color:#a48afb;">211</span><span style="color:#e3e3e3;">, </span><span style="color:#a48afb;">9</span><span style="color:#e3e3e3;">, </span><span style="color:#a48afb;">112</span><span style="color:#e3e3e3;">, </span><span style="color:#a48afb;">45</span><span style="color:#e3e3e3;">, </span><span style="color:#a48afb;">67</span><span style="color:#e3e3e3;">, </span><span style="color:#a48afb;">89</span><span style="color:#e3e3e3;">, </span><span style="color:#a48afb;">90</span><span style="color:#e3e3e3;">, </span><span style="color:#a48afb;">100</span><span style="color:#e3e3e3;">, </span><span style="color:#a48afb;">120</span><span style="color:#e3e3e3;">, </span><span style="color:#a48afb;">130</span><span style="color:#e3e3e3;">, </span><span style="color:#a48afb;">140</span><span style="color:#e3e3e3;">, </span><span style="color:#a48afb;">150</span><span style="color:#e3e3e3;">, </span><span style="color:#a48afb;">160</span><span style="color:#e3e3e3;">, </span><span style="color:#a48afb;">170</span><span style="color:#e3e3e3;">, </span><span style="color:#a48afb;">180</span><span style="color:#e3e3e3;">, </span><span style="color:#a48afb;">190</span><span style="color:#e3e3e3;">, </span></div>
<div style="position:absolute;left:57.700000000000045px;top:327.56px;font:normal 13.76px/13.76px 'Liberation Mono',monospace;color:#e3e3e3;white-space:pre;"><span style="color:#7cacf8;font-weight:bold;">status</span><span style="color:#e3e3e3;">: </span><span style="color:#5cd5fb;">&quot;uploaded&quot;</span></div>
<div style="position:absolute;left:57.700000000000045px;top:347.56px;font:normal 13.76px/13.76px 'Liberation Mono',monospace;color:#e3e3e3;white-space:pre;"><span style="color:#7cacf8;font-weight:bold;">token</span><span style="color:#e3e3e3;">: </span><span style="color:#5cd5fb;">&quot;&quot;</span></div>
<div style="position:absolute;left:42.89999999999998px;top:367.56px;font:normal 13.76px/13.76px 'Liberation Mono',monospace;color:#e3e3e3;white-space:pre;"><span style="color:#7cacf8;font-weight:bold;">from</span><span style="color:#e3e3e3;">: </span><span style="color:#5cd5fb;">&quot;8f49b223-bcc0-4269-977f-eb87f2343a92&quot;</span></div>
<div style="position:absolute;left:42.89999999999998px;top:387.56px;font:normal 13.76px/13.76px 'Liberation Mono',monospace;color:#e3e3e3;white-space:pre;"><span style="color:#7cacf8;font-weight:bold;">from_client_id</span><span style="color:#e3e3e3;">: </span><span style="color:#9aa0a6;">undefined</span></div>
<div style="position:absolute;left:42.89999999999998px;top:407.56px;font:normal 13.76px/13.76px 'Liberation Mono',monospace;color:#e3e3e3;white-space:pre;"><span style="color:#7cacf8;font-weight:bold;">id</span><span style="color:#e3e3e3;">: </span><span style="color:#5cd5fb;">&quot;369283d2-e274-4b68-bfcc-ede6cf6a71ae&quot;</span></div>
<div style="position:absolute;left:42.89999999999998px;top:427.56px;font:normal 13.76px/13.76px 'Liberation Mono',monospace;color:#e3e3e3;white-space:pre;"><span style="color:#7cacf8;font-weight:bold;">primary_key</span><span style="color:#e3e3e3;">: </span><span style="color:#a48afb;">113</span></div>
<svg style="position:absolute;left:28.5px;top:450.29999999999995px;" width="7" height="10" viewBox="0 0 7 10"><path d="M0 0.3L5.4 5L0 9.7Z" fill="#c7c7c7"/></svg>
<div style="position:absolute;left:42.89999999999998px;top:447.56px;font:normal 13.76px/13.76px 'Liberation Mono',monospace;color:#e3e3e3;white-space:pre;"><span style="color:#7cacf8;font-weight:bold;">qualified_conversation</span><span style="color:#e3e3e3;">: </span><span style="color:#e3e3e3;">{</span><span style="color:#a8a8a8;">domain</span><span style="color:#e3e3e3;">: </span><span style="color:#5cd5fb;">&#x27;wire.com&#x27;</span><span style="color:#e3e3e3;">, </span><span style="color:#a8a8a8;">id</span><span style="color:#e3e3e3;">: </span><span style="color:#5cd5fb;">&#x27;46f1b5ef-a9a9-4422-a5e0-0f55fa5c4d76&#x27;</span><span style="color:#e3e3e3;">}</span></div>
</div>
<div style="position:absolute;left:871px;top:549px;width:200px;height:24px;border:6px solid #f00;"></div>
<div style="position:absolute;left:871px;top:628px;width:907px;height:45px;border:6px solid #f00;border-top-width:7px;"></div>
</body></html>
